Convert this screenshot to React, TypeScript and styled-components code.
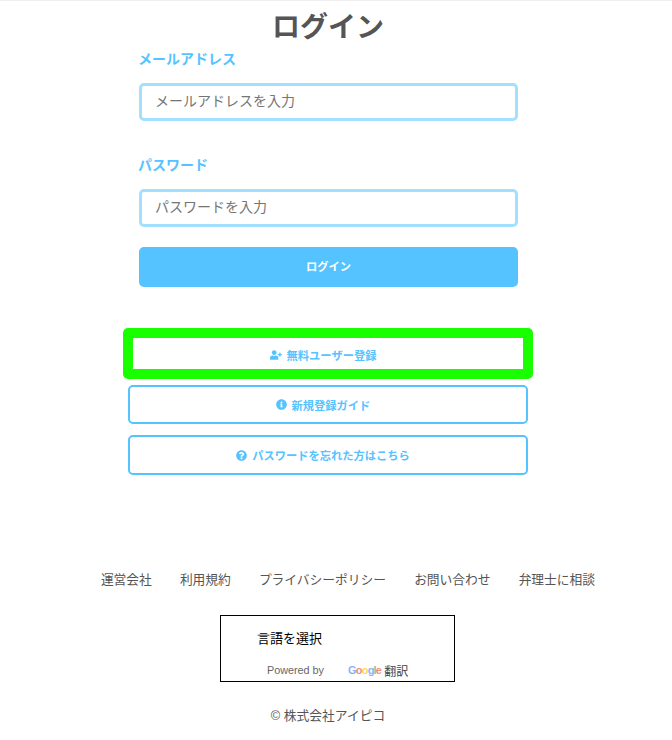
import React from "react";
import styled, { createGlobalStyle } from "styled-components";
import { FaInfoCircle, FaQuestionCircle, FaUserPlus } from "react-icons/fa";

const GlobalStyle = createGlobalStyle`
  html, body {
    margin: 0;
    padding: 0;
    background: #fff;
  }
  body {
    font-family: "Liberation Sans", "Noto Sans CJK JP", sans-serif;
    color: #555;
  }
  * {
    box-sizing: border-box;
  }
`;

const Root = styled.div`
  width: 672px;
  height: 740px;
  padding-right: 16px;
  border-top: 1px solid #eee;
  display: flex;
  flex-direction: column;
  align-items: center;
`;

const Title = styled.h1`
  margin: 8px 0 0;
  height: 37px;
  font-size: 28px;
  line-height: 37px;
  font-weight: 700;
  color: #555;
`;

const Form = styled.form`
  width: 379px;
  margin: 2px 0 0 1px;
  display: flex;
  flex-direction: column;
`;

const Label = styled.label`
  display: block;
  height: 22px;
  margin-left: -1px;
  font-size: 14px;
  line-height: 22px;
  font-weight: 700;
  color: #55c3ff;
`;

const Input = styled.input`
  display: block;
  width: 100%;
  height: 38px;
  margin: 13px 0 33px;
  padding: 0 13px 2px;
  border: 3px solid #a3dfff;
  border-radius: 5px;
  background: #fff;
  font-family: inherit;
  font-size: 14px;
  outline: none;

  &::placeholder {
    color: #757575;
    opacity: 1;
  }

  &:last-of-type {
    margin-bottom: 20px;
  }
`;

const SubmitButton = styled.button`
  width: 100%;
  height: 40px;
  padding: 0 0 2px;
  border: none;
  border-radius: 5px;
  background: #55c3ff;
  color: #fff;
  font-family: inherit;
  font-size: 11.25px;
  font-weight: 700;
`;

const Links = styled.div`
  width: 400px;
  margin-top: 41px;
  display: flex;
  flex-direction: column;
  align-items: center;
`;

const LinkButton = styled.a<{ $marked?: boolean; $height: number }>`
  display: flex;
  flex-shrink: 0;
  align-items: center;
  justify-content: center;
  gap: 5px;
  color: #55c3ff;
  background: #fff;
  font-size: 11.25px;
  font-weight: 700;
  text-decoration: none;
  width: ${(p) => (p.$marked ? "410px" : "400px")};
  height: ${(p) => p.$height}px;
  margin-bottom: ${(p) => (p.$marked ? "6px" : "11px")};
  padding: ${(p) => (p.$marked ? "2px" : "0")} 10px 0 0;
  border: ${(p) => (p.$marked ? "10px solid #1aff00" : "2px solid #55c3ff")};
  border-radius: 5px;

  &:last-child {
    margin-bottom: 10px;
  }

  svg {
    height: 11px;
    width: auto;
  }
`;

const UserIcon = styled(FaUserPlus)`
  && {
    height: 12px;
  }
`;

const FooterNav = styled.nav`
  display: flex;
  gap: 28px;
  margin: 85px 0 0 40px;
  font-size: 12.75px;
  line-height: 20px;
  color: #555;
`;

const FooterLink = styled.a`
  color: inherit;
  text-decoration: none;
`;

const TranslateBox = styled.div`
  width: 235px;
  height: 67px;
  margin: 25px 0 0 19px;
  padding: 13px 0 0 36px;
  border: 1px solid #000;
  background: #fff;
`;

const LanguageSelect = styled.div`
  height: 20px;
  font-size: 13px;
  line-height: 20px;
  color: #000;
`;

const PoweredBy = styled.div`
  display: flex;
  align-items: center;
  height: 16px;
  margin: 13px 0 0 10px;
  font-size: 10.8px;
  color: #666;
`;

const GoogleLogo = styled.span`
  margin-left: 24px;
  font-size: 11px;
  font-weight: 700;
  letter-spacing: -0.8px;
`;

const Letter = styled.span<{ $color: string }>`
  color: ${(p) => p.$color};
`;

const TranslateWord = styled.span`
  margin-left: 3px;
  font-size: 12px;
  color: #444;
`;

const Copyright = styled.p`
  margin: 24px 0 0;
  font-size: 12.75px;
  line-height: 20px;
  color: #555;
`;

const googleLetters: [string, string][] = [
  ["G", "#8ab4f8"],
  ["o", "#f28b82"],
  ["o", "#fdd663"],
  ["g", "#8ab4f8"],
  ["l", "#81c995"],
  ["e", "#f28b82"],
];

const footerLinks = ["運営会社", "利用規約", "プライバシーポリシー", "お問い合わせ", "弁理士に相談"];

const App = () => (
  <Root>
    <GlobalStyle />
    <Title>ログイン</Title>
    <Form>
      <Label>メールアドレス</Label>
      <Input placeholder="メールアドレスを入力" />
      <Label>パスワード</Label>
      <Input placeholder="パスワードを入力" />
      <SubmitButton type="button">ログイン</SubmitButton>
    </Form>
    <Links>
      <LinkButton $marked $height={51}>
        <UserIcon />
        無料ユーザー登録
      </LinkButton>
      <LinkButton $height={39}>
        <FaInfoCircle />
        新規登録ガイド
      </LinkButton>
      <LinkButton $height={40}>
        <FaQuestionCircle />
        パスワードを忘れた方はこちら
      </LinkButton>
    </Links>
    <FooterNav>
      {footerLinks.map((name) => (
        <FooterLink key={name}>{name}</FooterLink>
      ))}
    </FooterNav>
    <TranslateBox>
      <LanguageSelect>言語を選択</LanguageSelect>
      <PoweredBy>
        Powered by
        <GoogleLogo>
          {googleLetters.map(([c, color], i) => (
            <Letter key={i} $color={color}>
              {c}
            </Letter>
          ))}
        </GoogleLogo>
        <TranslateWord>翻訳</TranslateWord>
      </PoweredBy>
    </TranslateBox>
    <Copyright>© 株式会社アイピコ</Copyright>
  </Root>
);

export default App;
